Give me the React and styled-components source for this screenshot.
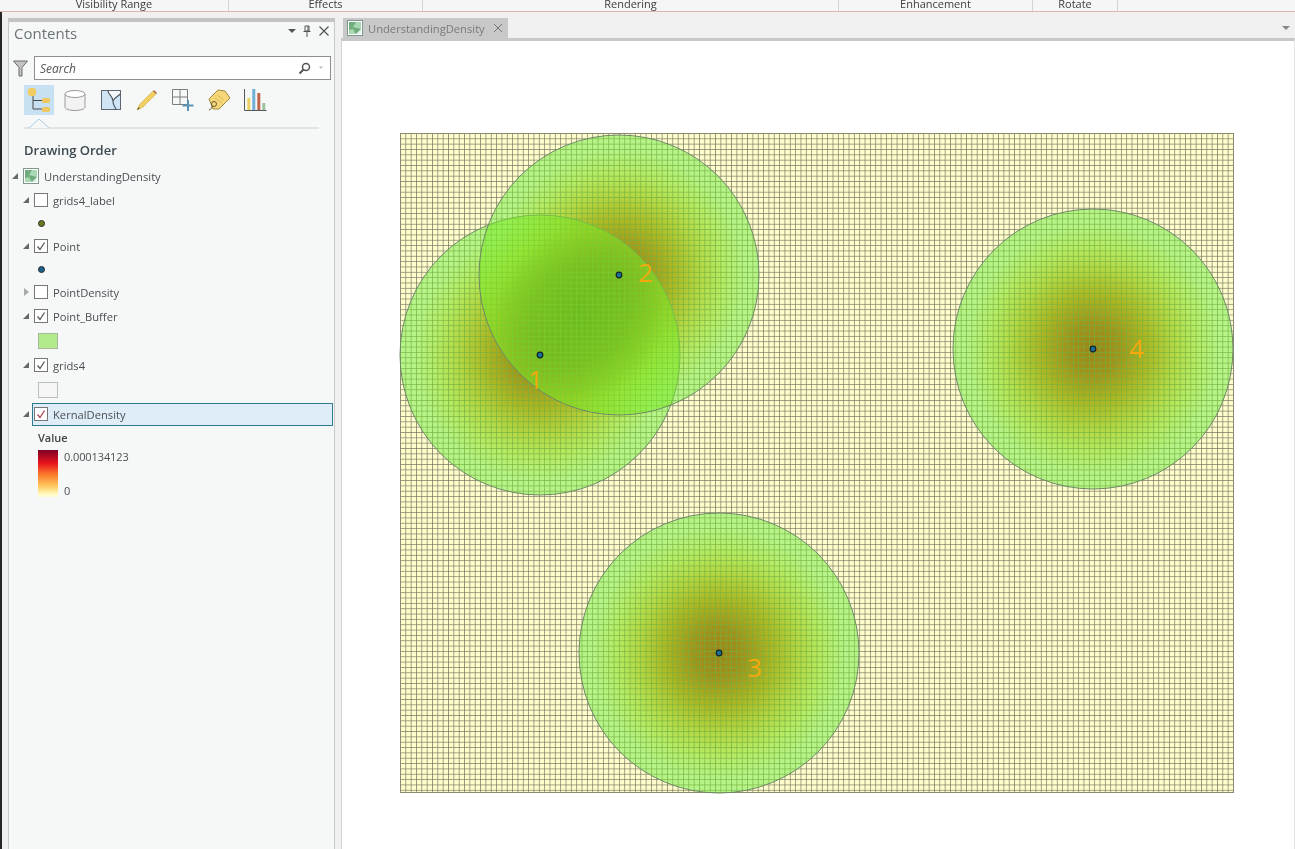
import styled, { createGlobalStyle } from 'styled-components'

const GlobalStyle = createGlobalStyle`
  html, body {
    margin: 0;
    height: 100%;
    background: #f0f0f0;
    overflow: hidden;
  }
  * { box-sizing: border-box; }
`

const uiFont = `'Open Sans', 'Noto Sans', 'Liberation Sans', sans-serif`

const Page = styled.div`
  width: 1295px;
  height: 849px;
  display: flex;
  flex-direction: column;
  font-family: ${uiFont};
  font-size: 11.2px;
  color: #444;
  overflow: hidden;
`

const Ribbon = styled.div`
  height: 12px;
  flex: none;
  display: flex;
  background: #f6f6f6;
  border-bottom: 1px solid #dcb8b0;
  overflow: hidden;
`

const RibbonGroup = styled.div`
  width: ${(p) => p.$w}px;
  height: 11px;
  border-right: 1px solid #d4d4d4;
  text-align: center;
  font-size: 11px;
  line-height: 8px;
  color: #3c3c3c;
  white-space: nowrap;
`

const Body = styled.div`
  flex: 1;
  display: flex;
  min-height: 0;
`

const Gutter = styled.div`
  width: 8px;
  flex: none;
  background: #f0f0f0;
  border-left: 2px solid #262626;
`

const ContentsPane = styled.aside`
  width: 327px;
  flex: none;
  margin-top: 6px;
  background: #f6f8f8;
  border-left: 1px solid #c8c8c8;
  border-right: 1px solid #c8c8c8;
  border-top: 4px solid #c4c4c4;
`

const PaneHeader = styled.div`
  height: 22px;
  display: flex;
  align-items: center;
  padding: 0 4px 0 5px;
`

const PaneTitle = styled.h2`
  flex: 1;
  margin: 0;
  font-size: 15px;
  font-weight: 400;
  color: #6b7378;
`

const PaneButtons = styled.div`
  display: flex;
  align-items: center;
  gap: 6px;
  margin-top: -4px;
`

const SearchRow = styled.div`
  display: flex;
  align-items: center;
  height: 24px;
  margin-top: 12px;
  padding-left: 4px;
`

const SearchBox = styled.div`
  width: 297px;
  height: 24px;
  margin-left: 6px;
  padding: 0 5px;
  display: flex;
  align-items: center;
  background: #fff;
  border: 1px solid #8e8e8e;
`

const SearchText = styled.span`
  flex: 1;
  font-style: italic;
  font-size: 12px;
  color: #555;
`

const ToolRow = styled.div`
  display: flex;
  align-items: center;
  gap: 6px;
  margin-top: 5px;
  padding-left: 15px;
`

const ToolButton = styled.div`
  width: 30px;
  height: 30px;
  display: flex;
  align-items: center;
  justify-content: center;
  background: ${(p) => (p.$active ? '#c7e0f2' : 'transparent')};
`

const ToolRule = styled.div`
  position: relative;
  height: 2px;
  margin: 12px 15px 0 15px;
  background: #e2e4e4;

  svg {
    position: absolute;
    left: 5px;
    top: -9px;
  }
`

const SectionTitle = styled.div`
  margin: 11px 0 4px 15px;
  height: 20px;
  line-height: 20px;
  font-size: 13px;
  font-weight: 600;
  color: #3f4a50;
`

const TreeRow = styled.div`
  height: ${(p) => p.$h || 24}px;
  display: flex;
  align-items: center;
  padding-left: ${(p) => p.$indent}px;
`

const SymbolRow = styled.div`
  height: ${(p) => p.$h}px;
  display: flex;
  align-items: center;
  padding-left: 29px;
`

const SelectedLayer = styled.div`
  width: 301px;
  height: 23px;
  display: flex;
  align-items: center;
  padding-left: 1px;
  background: #dfedf8;
  border: 1px solid #2b7a90;
`

const Arrow = styled.span`
  width: 0;
  height: 0;
  flex: none;
  margin-right: ${(p) => p.$gap ?? 5}px;
  border-style: solid;
  ${(p) =>
    p.$open
      ? `border-width: 0 0 6px 6px;
         border-color: transparent transparent #666 transparent;`
      : `border-width: 4px 0 4px 5px;
         border-color: transparent transparent transparent #aaa;
         margin-left: 1px;`}
`

const Check = styled.span`
  width: 14px;
  height: 14px;
  flex: none;
  display: flex;
  align-items: center;
  justify-content: center;
  background: #fff;
  border: 1px solid #777;
`

const LayerName = styled.span`
  margin-left: 5px;
  color: #4a4f54;
  white-space: nowrap;
`

const Dot = styled.span`
  width: 7px;
  height: 7px;
  border-radius: 50%;
  background: ${(p) => p.$color};
  border: 1px solid #2a2a2a;
`

const Swatch = styled.span`
  width: 20px;
  height: 16px;
  background: ${(p) => p.$color};
  border: 1px solid ${(p) => p.$line};
`

const Legend = styled.div`
  padding-left: 29px;
`

const LegendTitle = styled.div`
  height: 22px;
  margin-top: 1px;
  line-height: 22px;
  font-weight: 600;
  font-size: 11px;
  color: #444;
`

const LegendBody = styled.div`
  display: flex;
  margin-top: 1px;
  height: 47px;
`

const Ramp = styled.div`
  width: 20px;
  height: 47px;
  background: linear-gradient(#7d0026 0%, #e8141c 28%, #fb7a2c 52%, #fdc65c 76%, #fff6b4 92%, #fffde0 100%);
`

const RampLabels = styled.div`
  margin: -1px 0 0 6px;
  display: flex;
  flex-direction: column;
  justify-content: space-between;
  height: 49px;
  font-size: 11px;
  letter-spacing: -0.1px;
  color: #4a4f54;
`

const Splitter = styled.div`
  width: 6px;
  flex: none;
`

const MapPane = styled.main`
  flex: 1;
  display: flex;
  flex-direction: column;
  min-width: 0;
`

const TabStrip = styled.div`
  height: 20px;
  margin-top: 6px;
  flex: none;
  display: flex;
  align-items: center;
  justify-content: space-between;
  padding: 0 5px 0 2px;
  background: #f0f0f0;
`

const Tab = styled.div`
  width: 165px;
  height: 20px;
  display: flex;
  align-items: center;
  padding-left: 4px;
  background: #c8c8c8;
  color: #7a7a7a;
`

const TabName = styled.span`
  margin-left: 5px;
  flex: 1;
  white-space: nowrap;
`

const TabClose = styled.svg`
  margin-right: 5px;
`

const MapFrame = styled.div`
  flex: 1;
  background: #fff;
  border-top: 3px solid #c8c8c8;
  border-left: 1px solid #d4d4d4;
  border-right: 1px solid #e4e4e4;
  min-height: 0;
`

const MapSvg = styled.svg`
  display: block;
  width: 100%;
  height: 100%;
`

const Kernel = styled.circle`
  mix-blend-mode: multiply;
`

const MapLabel = styled.text`
  font-family: ${uiFont};
  font-size: 26px;
  fill: #f5a90f;
  text-anchor: middle;
`

const CheckMark = ({ color = '#555' }) => (
  <svg width='12' height='12' viewBox='0 0 12 12'>
    <path d='M2.5 6.5 L5 9.5 L9.5 2.5' fill='none' stroke={color} strokeWidth='1.3' />
  </svg>
)

const MapThumb = () => (
  <svg width='16' height='16' viewBox='0 0 16 16'>
    <rect x='.5' y='.5' width='15' height='15' fill='#fff' stroke='#7f9a8c' />
    <rect x='2' y='2' width='12' height='12' fill='#a8d8b4' />
    <path d='M2 2h7l-3 5 8 2v5H9L6 9l-4 1z' fill='#6fae7c' />
    <path d='M9 14l5-5v5z' fill='#e0f0ec' />
  </svg>
)

const TocIcon = () => (
  <svg width='26' height='28' viewBox='0 0 26 28'>
    <path d='M7 9v14h9M7 14.500h9' fill='none' stroke='#4a4a4a' strokeWidth='1' />
    <rect x='2' y='2' width='8' height='8' rx='3' fill='#f0cc60' />
    <rect x='16' y='12' width='8' height='5' rx='1.500' fill='#efc860' />
    <rect x='16' y='21' width='8' height='5' rx='1.500' fill='#efc860' />
  </svg>
)

const SourceIcon = () => (
  <svg width='24' height='24' viewBox='0 0 24 24'>
    <path d='M2 6v13c0 2 4.500 3.500 10 3.500s10-1.500 10-3.500V6' fill='#f2f2f2' stroke='#9a9a9a' />
    <ellipse cx='12' cy='6' rx='10' ry='3.500' fill='#fff' stroke='#9a9a9a' />
  </svg>
)

const SelectionIcon = () => (
  <svg width='22' height='22' viewBox='0 0 22 22'>
    <rect x='1.500' y='1.500' width='19' height='19' fill='#cfe4f4' stroke='#5c6670' />
    <path d='M8 2H20V5C18 7 15 8 13 12 13 7 8 6 8 2z' fill='#f4f8fa' />
    <path d='M8 1.500C8 6 13 7 13 12S15 17 16 20.500M13 12C15 8 18 7 20.500 5' fill='none' stroke='#4f5860' strokeWidth='1.200' />
  </svg>
)

const PencilIcon = () => (
  <svg width='22' height='24' viewBox='0 0 22 24'>
    <path d='M1 22l3-6L17 3l3 3L7 19z' fill='#efd060' stroke='#d0aa40' strokeWidth='.6' />
    <path d='M17 3l3 3 1-1-3-3z' fill='#b0624a' />
    <path d='M1 22l1.500-3 1.500 1.500z' fill='#6b5a30' />
  </svg>
)

const AddGridIcon = () => (
  <svg width='24' height='24' viewBox='0 0 24 24'>
    <path d='M1.500 1.500h15v15h-15zM9 1.500v15M1.500 9h15' fill='none' stroke='#7c7c7c' />
    <path d='M17 12v11M11.500 17.500h11' stroke='#5b93b8' strokeWidth='2' />
  </svg>
)

const TagIcon = () => (
  <svg width='26' height='24' viewBox='0 0 26 24'>
    <path d='M3 11 12 2l7 1 5 7-11 11H7z' fill='#f5d778' stroke='#a08a40' />
    <path d='M11 7l7 5M9 10l7 5' stroke='#dcbc58' />
    <circle cx='8' cy='16' r='2.500' fill='none' stroke='#6b5a30' />
    <path d='M6.500 18c-1 2-2 4-3.500 4' fill='none' stroke='#6b5a30' />
  </svg>
)

const ChartIcon = () => (
  <svg width='24' height='24' viewBox='0 0 24 24'>
    <path d='M1.500 1v21.500h22' fill='none' stroke='#55585a' />
    <rect x='4.300' y='10' width='3' height='12' fill='#ecd25e' />
    <rect x='9.300' y='1' width='3' height='21' fill='#6fb0d8' />
    <rect x='14.300' y='5' width='3' height='17' fill='#c0654c' />
    <rect x='19.300' y='15' width='3' height='7' fill='#9cc49c' />
  </svg>
)

const ribbonGroups = [
  { label: 'Visibility Range', w: 229 },
  { label: 'Effects', w: 194 },
  { label: 'Rendering', w: 416 },
  { label: 'Enhancement', w: 194 },
  { label: 'Rotate', w: 85 },
]

const tools = [TocIcon, SourceIcon, SelectionIcon, PencilIcon, AddGridIcon, TagIcon, ChartIcon]

const circles = [
  { cx: 540, cy: 355 },
  { cx: 619, cy: 275 },
  { cx: 719, cy: 653 },
  { cx: 1093, cy: 349 },
]

const labels = [
  { n: 1, x: 536, y: 389 },
  { n: 2, x: 646, y: 282 },
  { n: 3, x: 755, y: 677 },
  { n: 4, x: 1137, y: 358 },
]

// svg sits below the tab strip, so page coordinates are shifted by the viewBox origin
function DensityMap() {
  return (
    <MapSvg viewBox='342 41 952 808' preserveAspectRatio='xMinYMin slice'>
      <defs>
        <radialGradient id='kernel'>
          <stop offset='0%' stopColor='#c40c06' />
          <stop offset='18%' stopColor='#d02a0c' />
          <stop offset='38%' stopColor='#ea7a1c' />
          <stop offset='58%' stopColor='#fbc468' />
          <stop offset='74%' stopColor='#ffeeb0' />
          <stop offset='90%' stopColor='#ffffff' />
        </radialGradient>
        <radialGradient id='overlap'>
          <stop offset='0%' stopColor='#4a2030' />
          <stop offset='55%' stopColor='#8a5a58' />
          <stop offset='100%' stopColor='#ffffff' />
        </radialGradient>
        <pattern id='cells' x='400' y='133' width='5.34' height='5.34' patternUnits='userSpaceOnUse'>
          <path d='M5.34 0H0V5.34' fill='none' stroke='#6b6b55' strokeOpacity='.9' strokeWidth='1.4' />
        </pattern>
        <clipPath id='extent'>
          <rect x='400' y='133' width='834' height='660' />
        </clipPath>
      </defs>
      <g style={{ isolation: 'isolate' }}>
        <rect x='400' y='133' width='834' height='660' fill='#fffdcc' />
        <g clipPath='url(#extent)'>
          {circles.map((c) => (
            <Kernel key={c.cx} cx={c.cx} cy={c.cy} r='140' fill='url(#kernel)' />
          ))}
          <Kernel cx='580' cy='315' r='85' fill='url(#overlap)' />
        </g>
        <rect x='400' y='133' width='834' height='660' fill='url(#cells)' />
        <rect x='400.500' y='133.500' width='833' height='659' fill='none' stroke='#8a8a70' />
      </g>
      {circles.map((c) => (
        <circle
          key={c.cx}
          cx={c.cx}
          cy={c.cy}
          r='140'
          fill='#7aea28'
          fillOpacity='.55'
          stroke='#6e8a66'
          strokeWidth='1'
        />
      ))}
      {circles.map((c) => (
        <circle key={c.cx} cx={c.cx} cy={c.cy} r='2.800' fill='#1d6f96' stroke='#10242c' strokeWidth='1.200' />
      ))}
      {labels.map((l) => (
        <MapLabel key={l.n} x={l.x} y={l.y}>
          {l.n}
        </MapLabel>
      ))}
    </MapSvg>
  )
}

export default function App() {
  return (
    <Page>
      <GlobalStyle />
      <Ribbon>
        {ribbonGroups.map((g) => (
          <RibbonGroup key={g.label} $w={g.w}>
            {g.label}
          </RibbonGroup>
        ))}
      </Ribbon>
      <Body>
        <Gutter />
        <ContentsPane>
          <PaneHeader>
            <PaneTitle>Contents</PaneTitle>
            <PaneButtons>
              <svg width='8' height='8' viewBox='0 0 8 8'>
                <path d='M0 2h8L4 6z' fill='#555' />
              </svg>
              <svg width='10' height='12' viewBox='0 0 10 12'>
                <path d='M3 1h4v5H3zM1.500 6.500h7M5 7v5M6 1v5' fill='none' stroke='#555' />
              </svg>
              <svg width='12' height='12' viewBox='0 0 12 12'>
                <path d='M1.500 1.500l9 9M10.500 1.500l-9 9' stroke='#555' strokeWidth='1.200' />
              </svg>
            </PaneButtons>
          </PaneHeader>
          <SearchRow>
            <svg width='15' height='17' viewBox='0 0 15 17'>
              <path d='M.5 1h14L9 7.500V16H6V7.500z' fill='#c4c4c4' stroke='#6a6a6a' />
            </svg>
            <SearchBox>
              <SearchText>Search</SearchText>
              <svg width='13' height='13' viewBox='0 0 13 13'>
                <circle cx='8' cy='5' r='3.500' fill='none' stroke='#555' strokeWidth='1.500' />
                <path d='M5.500 7.500 1.500 11.500' stroke='#555' strokeWidth='2' />
              </svg>
              <svg width='14' height='6' viewBox='0 0 14 6'>
                <path d='M8 1.500h4l-2 2.500z' fill='#bbb' />
              </svg>
            </SearchBox>
          </SearchRow>
          <ToolRow>
            {tools.map((Icon, i) => (
              <ToolButton key={i} $active={i === 0}>
                <Icon />
              </ToolButton>
            ))}
          </ToolRow>
          <ToolRule>
            <svg width='20' height='10' viewBox='0 0 20 10'>
              <path d='M0 10 10 1l10 9' fill='#f6f8f8' stroke='#a8cce4' />
            </svg>
          </ToolRule>
          <SectionTitle>Drawing Order</SectionTitle>
          <TreeRow $indent={3}>
            <Arrow $open />
            <MapThumb />
            <LayerName>UnderstandingDensity</LayerName>
          </TreeRow>
          <TreeRow $indent={14}>
            <Arrow $open />
            <Check />
            <LayerName>grids4_label</LayerName>
          </TreeRow>
          <SymbolRow $h={22}>
            <Dot $color='#6f7a1c' />
          </SymbolRow>
          <TreeRow $indent={14}>
            <Arrow $open />
            <Check>
              <CheckMark />
            </Check>
            <LayerName>Point</LayerName>
          </TreeRow>
          <SymbolRow $h={22}>
            <Dot $color='#1d5f8c' />
          </SymbolRow>
          <TreeRow $indent={14}>
            <Arrow />
            <Check />
            <LayerName>PointDensity</LayerName>
          </TreeRow>
          <TreeRow $indent={14}>
            <Arrow $open />
            <Check>
              <CheckMark />
            </Check>
            <LayerName>Point_Buffer</LayerName>
          </TreeRow>
          <SymbolRow $h={25}>
            <Swatch $color='#b2ea8c' $line='#a8b8a0' />
          </SymbolRow>
          <TreeRow $indent={14}>
            <Arrow $open />
            <Check>
              <CheckMark />
            </Check>
            <LayerName>grids4</LayerName>
          </TreeRow>
          <SymbolRow $h={25}>
            <Swatch $color='#f6f6f6' $line='#bdbdbd' />
          </SymbolRow>
          <TreeRow $indent={14}>
            <Arrow $open $gap={3} />
            <SelectedLayer>
              <Check>
                <CheckMark color='#b0404c' />
              </Check>
              <LayerName>KernalDensity</LayerName>
            </SelectedLayer>
          </TreeRow>
          <Legend>
            <LegendTitle>Value</LegendTitle>
            <LegendBody>
              <Ramp />
              <RampLabels>
                <span>0.000134123</span>
                <span>0</span>
              </RampLabels>
            </LegendBody>
          </Legend>
        </ContentsPane>
        <Splitter />
        <MapPane>
          <TabStrip>
            <Tab>
              <MapThumb />
              <TabName>UnderstandingDensity</TabName>
              <TabClose width='10' height='10' viewBox='0 0 10 10'>
                <path d='M1 1l8 8M9 1l-8 8' stroke='#777' strokeWidth='1' />
              </TabClose>
            </Tab>
            <svg width='8' height='6' viewBox='0 0 8 6'>
              <path d='M0 1h8L4 5z' fill='#888' />
            </svg>
          </TabStrip>
          <MapFrame>
            <DensityMap />
          </MapFrame>
        </MapPane>
      </Body>
    </Page>
  )
}
